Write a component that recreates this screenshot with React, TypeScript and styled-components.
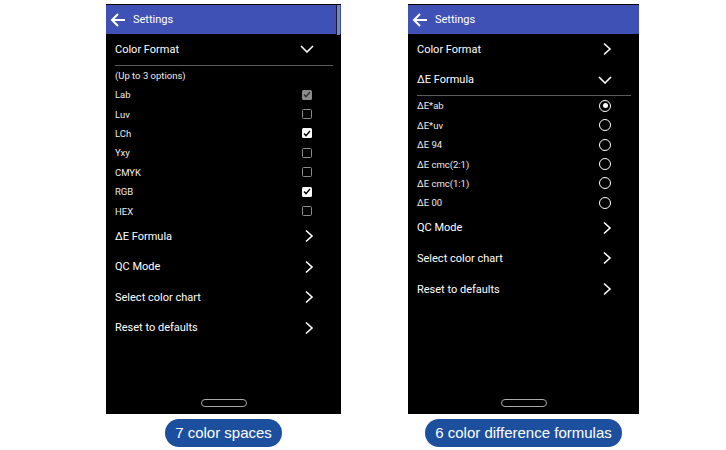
import React from 'react';
import styled, { createGlobalStyle } from 'styled-components';

const GlobalStyle = createGlobalStyle`
  html, body {
    margin: 0;
    padding: 0;
    background: #ffffff;
  }
  body {
    width: 726px;
    height: 450px;
    overflow: hidden;
    font-family: Roboto, 'Noto Sans', sans-serif;
  }
`;

const Page = styled.div`
  display: flex;
  align-items: flex-start;
  gap: 67px;
  padding: 4px 0 0 106px;
`;

const Column = styled.div<{ $width: number }>`
  display: flex;
  flex-direction: column;
  align-items: center;
  gap: 5px;
  width: ${(p) => p.$width}px;
`;

const Phone = styled.div`
  position: relative;
  display: flex;
  flex-direction: column;
  width: 100%;
  height: 410px;
  padding-top: 1px;
  box-sizing: border-box;
  background: #000000;
`;

const Header = styled.div`
  display: flex;
  align-items: center;
  gap: 7px;
  height: 29px;
  padding-left: 4px;
  background: #3f51b5;
  color: #ffffff;
  font-size: 11px;
`;

const ScrollThumb = styled.div`
  position: absolute;
  top: 1px;
  right: 1px;
  width: 3px;
  height: 30px;
  background: #7584cf;
  border-left: 1px solid #1c1c1c;
`;

const SectionRow = styled.div`
  display: flex;
  align-items: center;
  justify-content: space-between;
  height: 30.6px;
  padding: 0 27px 0 9px;
  color: #ffffff;
  font-size: 11px;
`;

const Divider = styled.div`
  height: 1px;
  margin: 0 8px 0 9px;
  background: #5a5a5a;
`;

const OptionRow = styled.div`
  display: flex;
  align-items: center;
  justify-content: space-between;
  height: 19.4px;
  padding: 0 27px 0 9px;
  color: #ececec;
  font-size: 9.5px;
`;

const Slot = styled.div`
  display: flex;
  align-items: center;
  justify-content: center;
  width: 14px;
`;

const CheckBox = styled.div<{ $state: 'off' | 'on' | 'locked' }>`
  display: flex;
  align-items: center;
  justify-content: center;
  width: 10px;
  height: 10px;
  box-sizing: border-box;
  border-radius: 1.5px;
  border: ${(p) => (p.$state === 'off' ? '1.5px solid #8c8c8c' : 'none')};
  background: ${(p) => (p.$state === 'on' ? '#ffffff' : p.$state === 'locked' ? '#8c8c8c' : 'transparent')};
`;

const Radio = styled.div<{ $on: boolean }>`
  display: flex;
  align-items: center;
  justify-content: center;
  width: 12px;
  height: 12px;
  box-sizing: border-box;
  border: 1.5px solid #ffffff;
  border-radius: 50%;

  &::after {
    content: '';
    display: ${(p) => (p.$on ? 'block' : 'none')};
    width: 5px;
    height: 5px;
    border-radius: 50%;
    background: #ffffff;
  }
`;

const HomeBar = styled.div`
  align-self: center;
  margin-top: auto;
  margin-bottom: 7px;
  width: 46px;
  height: 8px;
  box-sizing: border-box;
  border: 1.5px solid #a8a8a8;
  border-radius: 5px;
`;

const Caption = styled.div`
  height: 28px;
  padding: 0 10px;
  border-radius: 14px;
  background: #1d4f9f;
  color: #ffffff;
  font-family: 'Liberation Sans', Arial, sans-serif;
  font-size: 15px;
  line-height: 28px;
  white-space: nowrap;
`;

function BackArrow() {
  return (
    <svg width="16" height="14" viewBox="0 0 16 14">
      <path d="M15 7H2M8 1L2 7l6 6" fill="none" stroke="#fff" strokeWidth="2" />
    </svg>
  );
}

function ChevronDown() {
  return (
    <svg width="14" height="8" viewBox="0 0 14 8">
      <path d="M1 1l6 6 6-6" fill="none" stroke="#fff" strokeWidth="1.6" />
    </svg>
  );
}

function ChevronRight() {
  return (
    <svg width="14" height="14" viewBox="0 0 14 14">
      <path d="M6 1.5L12 7l-6 5.5" fill="none" stroke="#fff" strokeWidth="1.6" />
    </svg>
  );
}

function Tick({ color }: { color: string }) {
  return (
    <svg width="8" height="7" viewBox="0 0 8 7">
      <path d="M1 3.6l2 2L7 1" fill="none" stroke={color} strokeWidth="1.4" />
    </svg>
  );
}

type Box = 'off' | 'on' | 'locked';

const colorSpaces: { name: string; state: Box }[] = [
  { name: 'Lab', state: 'locked' },
  { name: 'Luv', state: 'off' },
  { name: 'LCh', state: 'on' },
  { name: 'Yxy', state: 'off' },
  { name: 'CMYK', state: 'off' },
  { name: 'RGB', state: 'on' },
  { name: 'HEX', state: 'off' },
];

const formulas = ['ΔE*ab', 'ΔE*uv', 'ΔE 94', 'ΔE cmc(2:1)', 'ΔE cmc(1:1)', 'ΔE 00'];

function Section({ title, open }: { title: string; open?: boolean }) {
  return (
    <SectionRow>
      <span>{title}</span>
      <Slot>{open ? <ChevronDown /> : <ChevronRight />}</Slot>
    </SectionRow>
  );
}

function TopBar({ scroll }: { scroll?: boolean }) {
  return (
    <>
      <Header>
        <BackArrow />
        <span>Settings</span>
      </Header>
      {scroll && <ScrollThumb />}
    </>
  );
}

export default function App() {
  return (
    <>
      <GlobalStyle />
      <Page>
        <Column $width={235}>
          <Phone>
            <TopBar scroll />
            <Section title="Color Format" open />
            <Divider />
            <OptionRow>(Up to 3 options)</OptionRow>
            {colorSpaces.map((c) => (
              <OptionRow key={c.name}>
                <span>{c.name}</span>
                <Slot>
                  <CheckBox $state={c.state}>
                    {c.state !== 'off' && <Tick color={c.state === 'on' ? '#000' : '#333'} />}
                  </CheckBox>
                </Slot>
              </OptionRow>
            ))}
            <Section title="ΔE Formula" />
            <Section title="QC Mode" />
            <Section title="Select color chart" />
            <Section title="Reset to defaults" />
            <HomeBar />
          </Phone>
          <Caption>7 color spaces</Caption>
        </Column>

        <Column $width={231}>
          <Phone>
            <TopBar />
            <Section title="Color Format" />
            <Section title="ΔE Formula" open />
            <Divider />
            {formulas.map((f, i) => (
              <OptionRow key={f}>
                <span>{f}</span>
                <Slot>
                  <Radio $on={i === 0} />
                </Slot>
              </OptionRow>
            ))}
            <Section title="QC Mode" />
            <Section title="Select color chart" />
            <Section title="Reset to defaults" />
            <HomeBar />
          </Phone>
          <Caption>6 color difference formulas</Caption>
        </Column>
      </Page>
    </>
  );
}
